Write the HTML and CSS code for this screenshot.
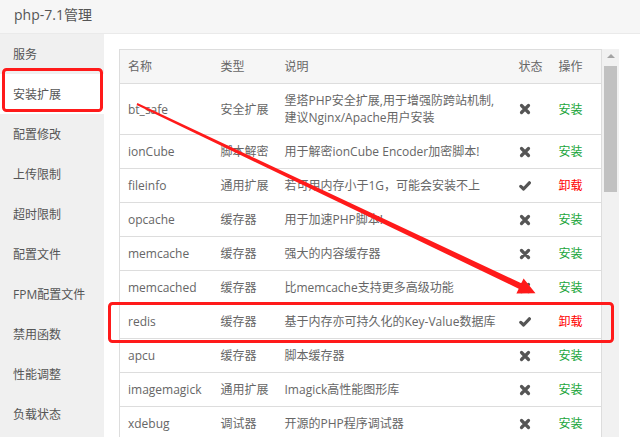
FILE: index.html
```html
<!DOCTYPE html>
<html lang="zh-CN">
<head>
<meta charset="utf-8">
<title>php-7.1管理</title>
<link rel="stylesheet" href="styles.css">
</head>
<body>
<div class="page">
  <header class="title-bar">php-7.1管理</header>
  <div class="body-row">
    <nav class="side">
      <div class="side-item">服务</div>
      <div class="side-item active">安装扩展</div>
      <div class="side-item">配置修改</div>
      <div class="side-item">上传限制</div>
      <div class="side-item">超时限制</div>
      <div class="side-item">配置文件</div>
      <div class="side-item">FPM配置文件</div>
      <div class="side-item">禁用函数</div>
      <div class="side-item">性能调整</div>
      <div class="side-item">负载状态</div>
    </nav>
    <main class="content">
      <div class="table-wrap">
        <table class="ext-table">
          <colgroup>
            <col class="c-name"><col class="c-type"><col class="c-desc"><col class="c-stat"><col class="c-op">
          </colgroup>
          <thead>
            <tr><th>名称</th><th>类型</th><th>说明</th><th>状态</th><th>操作</th></tr>
          </thead>
          <tbody>
            <tr><td>bt_safe</td><td>安全扩展</td><td class="desc">堡塔PHP安全扩展,用于增强防跨站机制,<br>建议Nginx/Apache用户安装</td><td><svg class="ico" viewBox="0 0 12 12"><path d="M2.5 2.5 9.5 9.5M9.5 2.5 2.5 9.5"/></svg></td><td><a class="op install">安装</a></td></tr>
            <tr><td>ionCube</td><td>脚本解密</td><td class="desc">用于解密ionCube Encoder加密脚本!</td><td><svg class="ico" viewBox="0 0 12 12"><path d="M2.5 2.5 9.5 9.5M9.5 2.5 2.5 9.5"/></svg></td><td><a class="op install">安装</a></td></tr>
            <tr><td>fileinfo</td><td>通用扩展</td><td class="desc">若可用内存小于1G，可能会安装不上</td><td><svg class="ico" viewBox="0 0 12 12"><path d="M1.8 6.4 4.6 9 10.4 2.8"/></svg></td><td><a class="op remove">卸载</a></td></tr>
            <tr><td>opcache</td><td>缓存器</td><td class="desc">用于加速PHP脚本!</td><td><svg class="ico" viewBox="0 0 12 12"><path d="M2.5 2.5 9.5 9.5M9.5 2.5 2.5 9.5"/></svg></td><td><a class="op install">安装</a></td></tr>
            <tr><td>memcache</td><td>缓存器</td><td class="desc">强大的内容缓存器</td><td><svg class="ico" viewBox="0 0 12 12"><path d="M2.5 2.5 9.5 9.5M9.5 2.5 2.5 9.5"/></svg></td><td><a class="op install">安装</a></td></tr>
            <tr><td>memcached</td><td>缓存器</td><td class="desc">比memcache支持更多高级功能</td><td><svg class="ico" viewBox="0 0 12 12"><path d="M2.5 2.5 9.5 9.5M9.5 2.5 2.5 9.5"/></svg></td><td><a class="op install">安装</a></td></tr>
            <tr><td>redis</td><td>缓存器</td><td class="desc">基于内存亦可持久化的Key-Value数据库</td><td><svg class="ico" viewBox="0 0 12 12"><path d="M1.8 6.4 4.6 9 10.4 2.8"/></svg></td><td><a class="op remove">卸载</a></td></tr>
            <tr><td>apcu</td><td>缓存器</td><td class="desc">脚本缓存器</td><td><svg class="ico" viewBox="0 0 12 12"><path d="M2.5 2.5 9.5 9.5M9.5 2.5 2.5 9.5"/></svg></td><td><a class="op install">安装</a></td></tr>
            <tr><td>imagemagick</td><td>通用扩展</td><td class="desc">Imagick高性能图形库</td><td><svg class="ico" viewBox="0 0 12 12"><path d="M2.5 2.5 9.5 9.5M9.5 2.5 2.5 9.5"/></svg></td><td><a class="op install">安装</a></td></tr>
            <tr><td>xdebug</td><td>调试器</td><td class="desc">开源的PHP程序调试器</td><td><svg class="ico" viewBox="0 0 12 12"><path d="M2.5 2.5 9.5 9.5M9.5 2.5 2.5 9.5"/></svg></td><td><a class="op install">安装</a></td></tr>
          </tbody>
        </table>
      </div>
      <div class="scrollbar">
        <div class="sb-arrow"></div>
        <div class="sb-thumb"></div>
      </div>
    </main>
  </div>
  <svg class="annot" width="640" height="437" viewBox="0 0 640 437">
    <rect x="3.5" y="69.5" width="98" height="41" rx="3" ry="3" fill="none" stroke="#ff1a1a" stroke-width="3"/>
    <rect x="109.5" y="303.5" width="503" height="38" rx="3" ry="3" fill="none" stroke="#ff1a1a" stroke-width="3"/>
    <polygon points="137.4,103 521.3,283.3 523.6,278.6 535.5,293.2 516.4,293.4 518.7,288.7 136.6,105" fill="#ff1a1a"/>
  </svg>
</div>
</body>
</html>
```

FILE: styles.css
```css
html, body {
  margin: 0;
  padding: 0;
  background: #fff;
}
body {
  width: 640px;
  height: 437px;
  overflow: hidden;
  font-family: "Open Sans", "Noto Sans CJK SC", sans-serif;
  font-size: 12px;
  color: #666;
}
.page {
  position: relative;
  width: 640px;
  height: 437px;
  display: flex;
  flex-direction: column;
}
.title-bar {
  height: 33px;
  line-height: 30px;
  padding-left: 14px;
  font-size: 14px;
  color: #555;
  background: #f6f6f6;
  border-bottom: 1px solid #eaeaea;
  flex: none;
}
.body-row {
  flex: 1;
  display: flex;
  min-height: 0;
}
.side {
  width: 104px;
  flex: none;
  background: #f0f0f0;
}
.side-item {
  height: 40px;
  line-height: 41px;
  padding-left: 13px;
  color: #555;
  white-space: nowrap;
}
.side-item.active {
  background: #fff;
}
.content {
  flex: 1;
  display: flex;
  align-items: flex-start;
  padding: 15px 0 0 15px;
  min-height: 0;
}
.table-wrap {
  width: 482px;
  flex: none;
}
.ext-table {
  width: 482px;
  table-layout: fixed;
  border-collapse: collapse;
  border: 1px solid #ddd;
}
.c-name { width: 93px; }
.c-type { width: 64px; }
.c-desc { width: 234px; }
.c-stat { width: 40px; }
.c-op { width: 51px; }
.ext-table th,
.ext-table td {
  padding: 8px 8px;
  line-height: 17px;
  text-align: left;
  font-weight: normal;
  border-bottom: 1px solid #ddd;
  white-space: nowrap;
  overflow: visible;
  vertical-align: middle;
}
.ext-table thead th {
  background: #f6f6f6;
}
.ico {
  display: block;
  width: 12px;
  height: 12px;
  margin-left: 0;
  fill: none;
  stroke: #555;
  stroke-width: 3.2;
  stroke-linecap: round;
  stroke-linejoin: round;
}
.op {
  text-decoration: none;
}
.op.install {
  color: #20a53a;
}
.op.remove {
  color: #f00;
}
.scrollbar {
  width: 17px;
  height: 388px;
  margin-left: 1px;
  background: #f1f1f1;
  flex: none;
  display: flex;
  flex-direction: column;
  align-items: center;
}
.sb-arrow {
  width: 0;
  height: 0;
  margin-top: 5px;
  border-left: 4px solid transparent;
  border-right: 4px solid transparent;
  border-bottom: 4px solid #a3a3a3;
}
.sb-thumb {
  width: 13px;
  height: 126px;
  margin-top: 8px;
  background: #c1c1c1;
}
.annot {
  position: absolute;
  left: 0;
  top: 0;
  pointer-events: none;
}
```
